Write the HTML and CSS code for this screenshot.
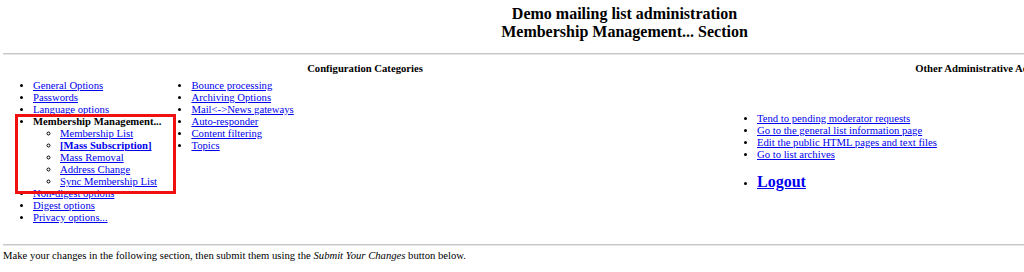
FILE: index.html
```html
<!DOCTYPE html>
<html lang="en">
<head>
<meta charset="utf-8">
<title>Demo Administration</title>
<link rel="stylesheet" href="styles.css">
</head>
<body>
<div class="page">
  <h1 class="title">Demo mailing list administration<br>Membership Management... Section</h1>
  <hr class="rule rule-top">
  <div class="cats">
    <h2 class="col-head">Configuration Categories</h2>
    <h2 class="col-head">Other Administrative Activities</h2>
    <div class="config-body">
      <ul class="cat-list">
        <li><a href="#">General Options</a></li>
        <li><a href="#">Passwords</a></li>
        <li><a href="#">Language options</a></li>
        <li class="current"><strong>Membership Management...</strong>
          <ul class="sub-list">
            <li><a href="#">Membership List</a></li>
            <li><a href="#" class="active">[Mass Subscription]</a></li>
            <li><a href="#">Mass Removal</a></li>
            <li><a href="#">Address Change</a></li>
            <li><a href="#">Sync Membership List</a></li>
          </ul>
          <span class="highlight" aria-hidden="true"></span>
        </li>
        <li><a href="#">Non-digest options</a></li>
        <li><a href="#">Digest options</a></li>
        <li><a href="#">Privacy options...</a></li>
      </ul>
      <ul class="cat-list">
        <li><a href="#">Bounce processing</a></li>
        <li><a href="#">Archiving Options</a></li>
        <li><a href="#">Mail&lt;-&gt;News gateways</a></li>
        <li><a href="#">Auto-responder</a></li>
        <li><a href="#">Content filtering</a></li>
        <li><a href="#">Topics</a></li>
      </ul>
    </div>
    <div class="other-body">
      <ul class="cat-list other-list">
        <li><a href="#">Tend to pending moderator requests</a></li>
        <li><a href="#">Go to the general list information page</a></li>
        <li><a href="#">Edit the public HTML pages and text files</a></li>
        <li><a href="#">Go to list archives</a></li>
        <li class="logout-item"><a href="#" class="logout">Logout</a></li>
      </ul>
    </div>
  </div>
  <hr class="rule rule-bottom">
  <p class="note">Make your changes in the following section, then submit them using the <em>Submit Your Changes</em> button below.</p>
</div>
</body>
</html>
```

FILE: styles.css
```css
html {
  overflow: hidden;
}

body {
  margin: 0;
  background: #ffffff;
  color: #000000;
  font-family: "Liberation Serif", "Times New Roman", serif;
  font-size: 10.667px;
  line-height: 12px;
}

a {
  color: #0000ee;
}

.page {
  width: 1243px;
  padding-left: 3px;
}

.title {
  margin: 0;
  padding-top: 5px;
  font-size: 16px;
  line-height: 18px;
  font-weight: bold;
  text-align: center;
}

.rule {
  margin: 0;
  height: 0;
  border: 0;
  border-top: 1px solid #c8c8c8;
  border-bottom: 1px solid #e4e4e4;
}

.rule-top {
  margin-top: 12px;
}

.cats {
  display: grid;
  grid-template-columns: 724px 1fr;
  margin-top: 8px;
}

.col-head {
  margin: 0;
  font-size: 10.667px;
  line-height: 12px;
  font-weight: bold;
  text-align: center;
}

.config-body {
  display: flex;
  align-items: flex-start;
  gap: 3px;
  padding: 5px 0 0 3px;
}

.other-body {
  align-self: center;
  padding: 5px 0 0 3px;
}

.cat-list {
  margin: 0;
  padding-left: 27px;
  list-style: disc;
}

.sub-list {
  margin: 0;
  padding-left: 27px;
  list-style: circle;
}

.current {
  position: relative;
}

.highlight {
  position: absolute;
  left: -18px;
  top: -2px;
  width: 161px;
  height: 80px;
  box-sizing: border-box;
  border: 3px solid #f01010;
}

.active {
  font-weight: bold;
}

.logout-item {
  margin-top: 12px;
}

.logout {
  font-size: 16px;
  line-height: 18px;
  font-weight: bold;
}

.rule-bottom {
  margin-top: 20px;
}

.note {
  margin: 4px 0 0;
}
```
